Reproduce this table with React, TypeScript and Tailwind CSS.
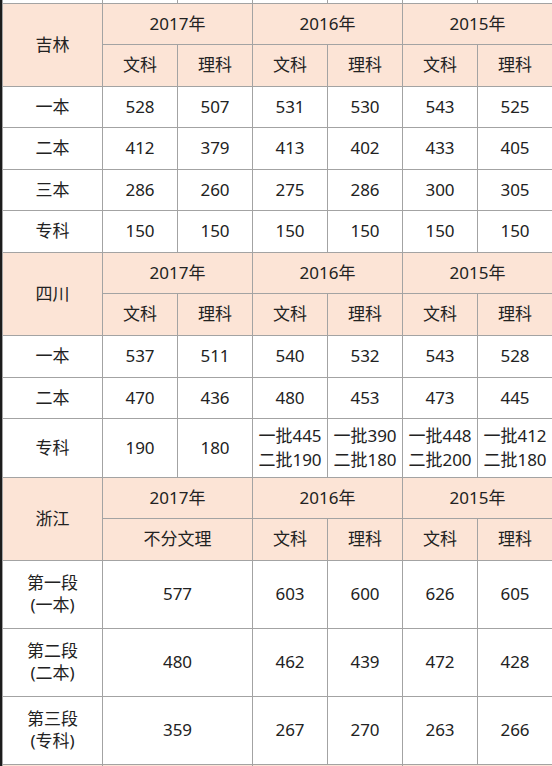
import React from "react";

const B = "border border-[#a3a3a3]";
const peach = "bg-[#fce4d6]";

function H({ children, colSpan, rowSpan }: { children?: React.ReactNode; colSpan?: number; rowSpan?: number }) {
  return (
    <td colSpan={colSpan} rowSpan={rowSpan} className={`${B} ${peach} text-center align-middle p-0`}>
      {children}
    </td>
  );
}

function C({ children, colSpan }: { children?: React.ReactNode; colSpan?: number }) {
  return (
    <td colSpan={colSpan} className={`${B} bg-white text-center align-middle p-0`}>
      {children}
    </td>
  );
}

function YearRows({ name, h1, h2, second }: { name: string; h1: string; h2: string; second?: React.ReactNode }) {
  return (
    <>
      <tr className={h1}>
        <H rowSpan={2}>{name}</H>
        <H colSpan={2}>2017年</H>
        <H colSpan={2}>2016年</H>
        <H colSpan={2}>2015年</H>
      </tr>
      <tr className={h2}>
        {second ?? (
          <>
            <H>文科</H>
            <H>理科</H>
          </>
        )}
        <H>文科</H>
        <H>理科</H>
        <H>文科</H>
        <H>理科</H>
      </tr>
    </>
  );
}

function DataRow({ label, vals, h }: { label: React.ReactNode; vals: React.ReactNode[]; h: string }) {
  return (
    <tr className={h}>
      <C>{label}</C>
      {vals.map((v, i) => (
        <C key={i}>{v}</C>
      ))}
    </tr>
  );
}

const Two = ({ a, b }: { a: string; b: string }) => (
  <div className="leading-[24px] whitespace-nowrap">
    <div>{a}</div>
    <div>{b}</div>
  </div>
);

const Lbl = ({ a, b }: { a: string; b: string }) => (
  <div className="leading-[22px]">
    <div>{a}</div>
    <div>{b}</div>
  </div>
);

export default function App() {
  return (
    <div
      className="flex h-[766px] w-[552px] overflow-hidden bg-white text-[17px] text-[#222]"
      style={{ fontFamily: '"Noto Sans", "Noto Sans CJK SC", sans-serif' }}
    >
      <div className="w-[2px] shrink-0 bg-[#1c1c1c]" />
      <table className="border-collapse table-fixed w-[551px] shrink-0">
        <colgroup>
          <col className="w-[100px]" />
          <col className="w-[75px]" />
          <col className="w-[75px]" />
          <col className="w-[75px]" />
          <col className="w-[75px]" />
          <col className="w-[75px]" />
          <col className="w-[75px]" />
        </colgroup>
        <tbody>
          <tr className="h-[3px]">
            {Array.from({ length: 7 }).map((_, i) => (
              <td key={i} className="border-x border-b border-[#a3a3a3] bg-white p-0" />
            ))}
          </tr>
          <YearRows name="吉林" h1="h-[41px]" h2="h-[42px]" />
          <DataRow label="一本" h="h-[41px]" vals={["528", "507", "531", "530", "543", "525"]} />
          <DataRow label="二本" h="h-[42px]" vals={["412", "379", "413", "402", "433", "405"]} />
          <DataRow label="三本" h="h-[41px]" vals={["286", "260", "275", "286", "300", "305"]} />
          <DataRow label="专科" h="h-[42px]" vals={["150", "150", "150", "150", "150", "150"]} />
          <YearRows name="四川" h1="h-[41px]" h2="h-[42px]" />
          <DataRow label="一本" h="h-[42px]" vals={["537", "511", "540", "532", "543", "528"]} />
          <DataRow label="二本" h="h-[41px]" vals={["470", "436", "480", "453", "473", "445"]} />
          <DataRow
            label="专科"
            h="h-[59px]"
            vals={[
              "190",
              "180",
              <Two a="一批445" b="二批190" />,
              <Two a="一批390" b="二批180" />,
              <Two a="一批448" b="二批200" />,
              <Two a="一批412" b="二批180" />,
            ]}
          />
          <YearRows name="浙江" h1="h-[41px]" h2="h-[42px]" second={<H colSpan={2}>不分文理</H>} />
          <tr className="h-[68px]">
            <C>
              <Lbl a="第一段" b="(一本)" />
            </C>
            <C colSpan={2}>577</C>
            <C>603</C>
            <C>600</C>
            <C>626</C>
            <C>605</C>
          </tr>
          <tr className="h-[68px]">
            <C>
              <Lbl a="第二段" b="(二本)" />
            </C>
            <C colSpan={2}>480</C>
            <C>462</C>
            <C>439</C>
            <C>472</C>
            <C>428</C>
          </tr>
          <tr className="h-[68px]">
            <C>
              <Lbl a="第三段" b="(专科)" />
            </C>
            <C colSpan={2}>359</C>
            <C>267</C>
            <C>270</C>
            <C>263</C>
            <C>266</C>
          </tr>
          <tr className="h-[41px]">
            <H />
            <H colSpan={2} />
            <H colSpan={2} />
            <H colSpan={2} />
          </tr>
        </tbody>
      </table>
    </div>
  );
}
